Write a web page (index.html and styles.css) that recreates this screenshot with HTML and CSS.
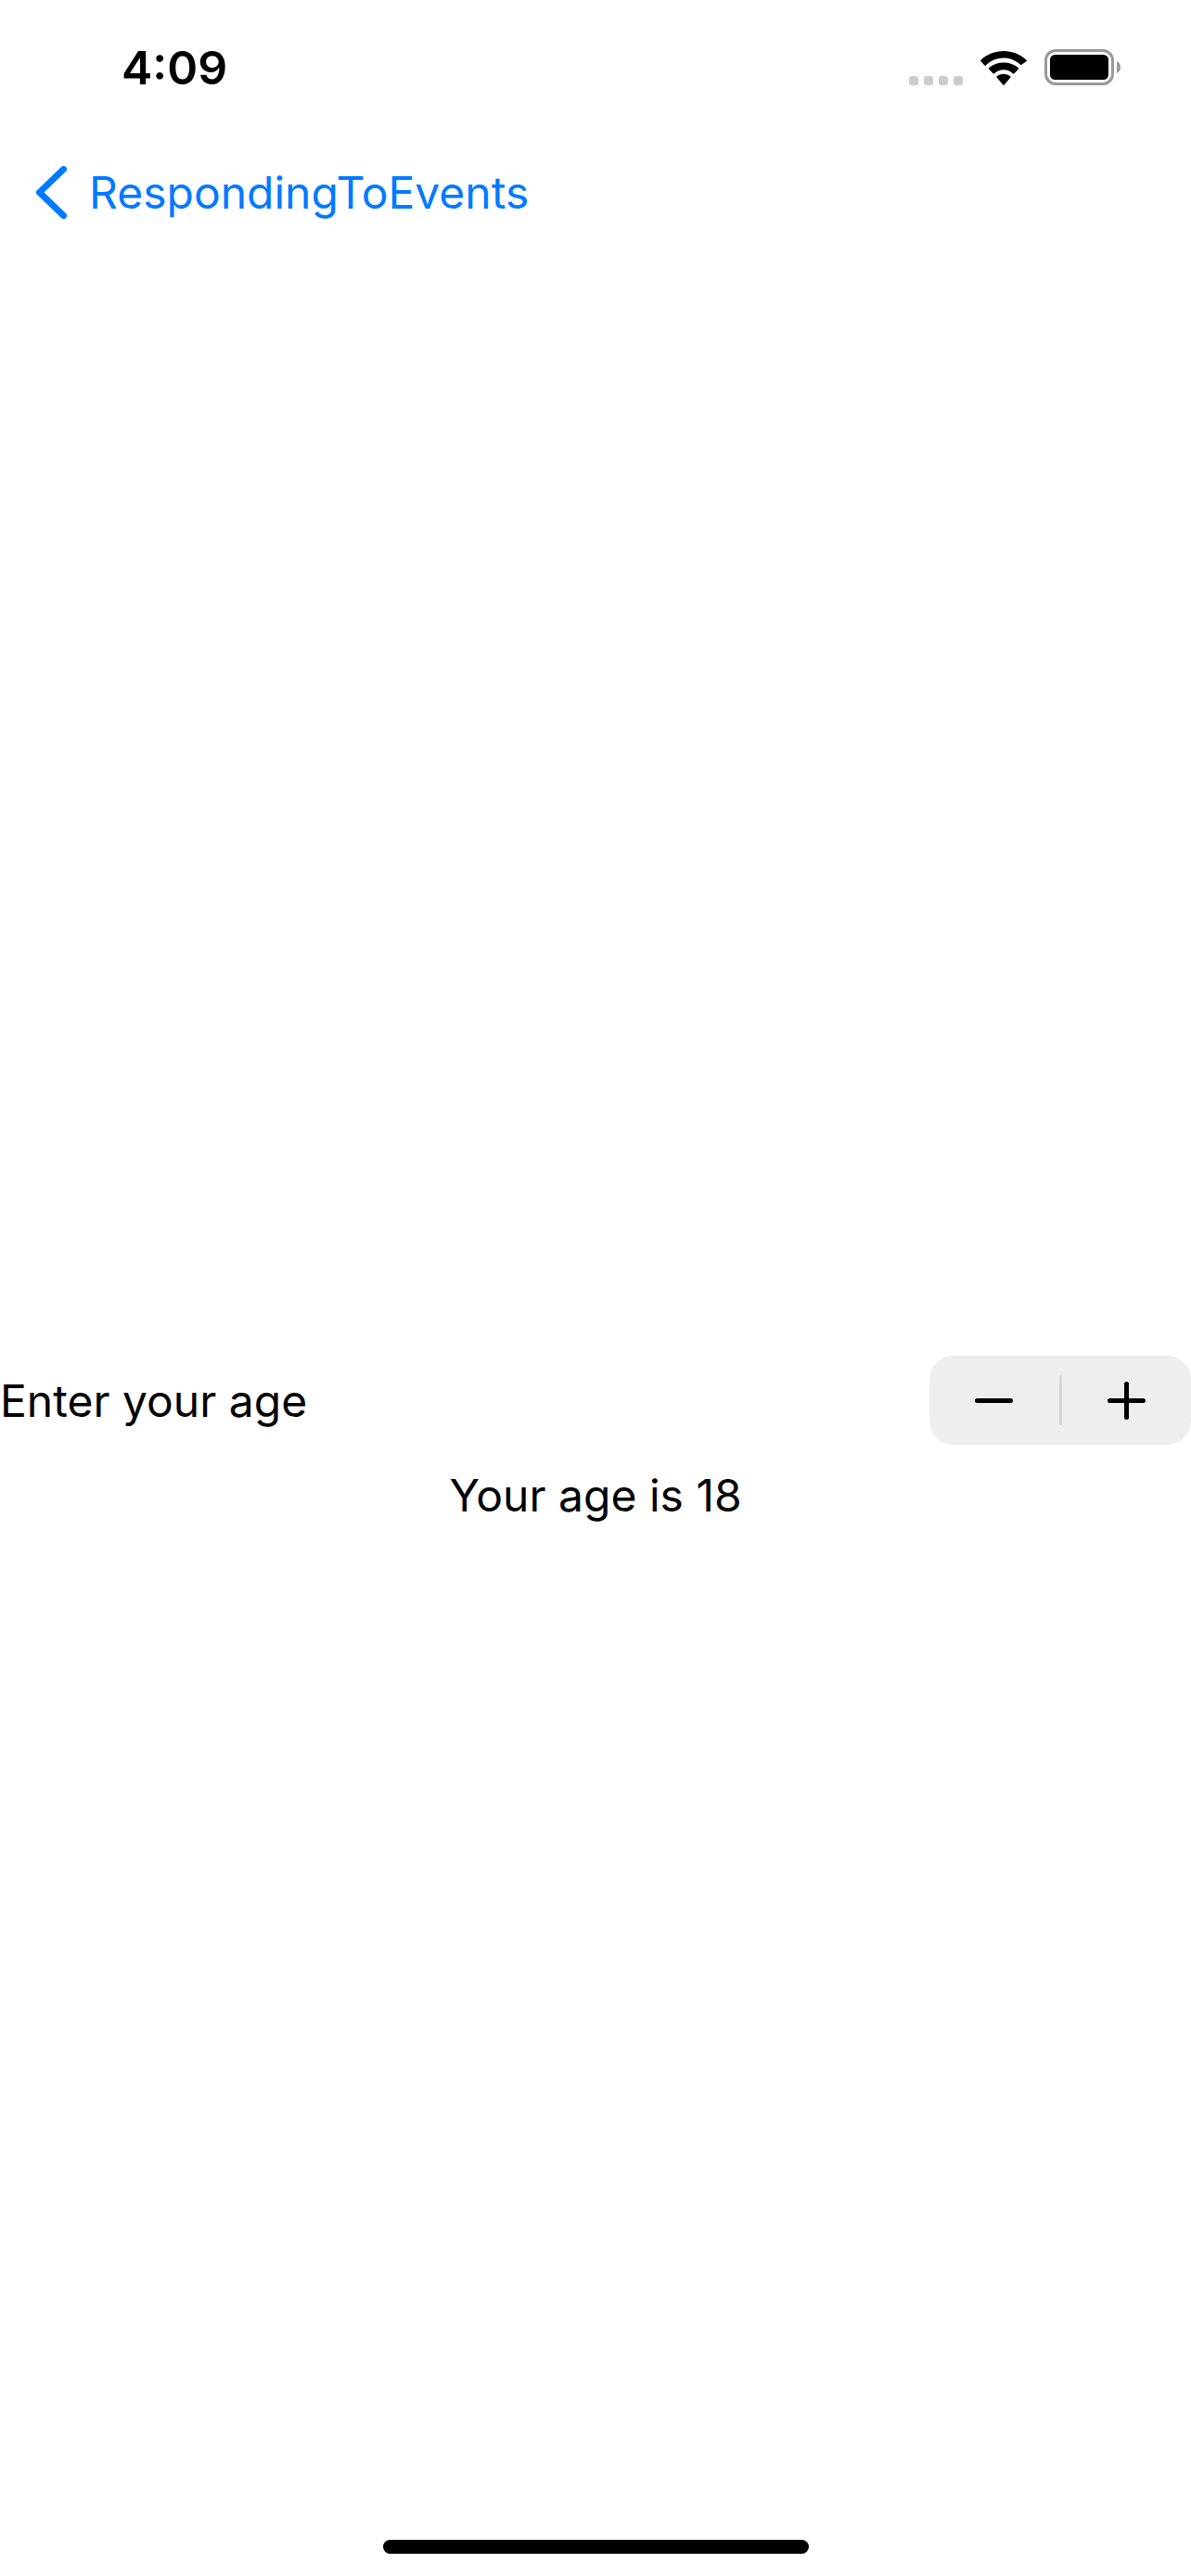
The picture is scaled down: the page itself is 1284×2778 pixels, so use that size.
FILE: index.html
```html
<!DOCTYPE html>
<html lang="en">
<head>
<meta charset="utf-8">
<meta name="viewport" content="width=device-width, initial-scale=1">
<title>RespondingToEvents</title>
<link rel="stylesheet" href="styles.css">
</head>
<body>
<div class="screen">
  <div class="status-bar">
    <time class="clock">4:09</time>
    <div class="status-icons">
      <svg class="signal" width="58" height="10" viewBox="0 0 58 10" aria-hidden="true">
        <rect x="0" width="10" height="10" rx="3"/>
        <rect x="16" width="10" height="10" rx="3"/>
        <rect x="32" width="10" height="10" rx="3"/>
        <rect x="48" width="10" height="10" rx="3"/>
      </svg>
      <svg class="wifi" width="50" height="37" viewBox="0 0 50 37" aria-hidden="true">
        <path d="M25 7.5c6.900 0 13.200 2.700 18 7.200.4.400 1 .4 1.400 0l5.200-3.700c.4-.4.400-.9 0-1.300C42.900 3.500 34.300 0 25 0S7.100 3.500.4 9.700c-.4.400-.4.900 0 1.300l4 4.600c.4.400 1 .4 1.400 0C10.900 10.300 17.600 7.500 25 7.500z"/>
        <path d="M25 20.300c3.800 0 7.300 1.500 9.900 3.900.4.400 1 .4 1.400 0l4.700-4.600c.4-.4.400-.9 0-1.300-4.300-4-9.900-5.900-16-5.900s-11.700 1.900-16 5.900c-.4.400-.4.900 0 1.300l4.700 4.600c.4.400 1 .4 1.400 0 2.600-2.400 6.100-3.900 9.900-3.900z"/>
        <path d="M32.400 28.600c.4-.4.400-.9 0-1.300A11.300 11.300 0 0 0 25 24.800c-2.800 0-5.400.9-7.400 2.500-.4.400-.4.900 0 1.300l6.700 7.900c.4.400 1 .4 1.400 0z"/>
      </svg>
      <svg class="battery" width="82" height="39" viewBox="0 0 82 39" aria-hidden="true">
        <rect class="battery-shell" x="1.500" y="1.500" width="72" height="36" rx="10.500"/>
        <rect x="6" y="6" width="63" height="27" rx="5.500"/>
        <path class="battery-cap" d="M78 13c2.500 1 4 3.700 4 6.500s-1.500 5.500-4 6.500z"/>
      </svg>
    </div>
  </div>

  <nav class="nav-bar">
    <a class="back" href="#">
      <svg width="33" height="57" viewBox="0 0 33 57" aria-hidden="true">
        <path d="M29.500 3.500L3.500 28.500l26 25"/>
      </svg>
      <span>RespondingToEvents</span>
    </a>
  </nav>

  <main class="content">
    <div class="stepper-row">
      <span id="age-label">Enter your age</span>
      <div class="stepper" role="group" aria-labelledby="age-label">
        <button class="step" type="button" aria-label="Decrement">
          <svg width="41" height="41" viewBox="0 0 41 41" aria-hidden="true"><path d="M2.500 20.500h36"/></svg>
        </button>
        <span class="divider"></span>
        <button class="step" type="button" aria-label="Increment">
          <svg width="41" height="41" viewBox="0 0 41 41" aria-hidden="true"><path d="M2.500 20.500h36M20.500 2.500v36"/></svg>
        </button>
      </div>
    </div>
    <p class="result">Your age is 18</p>
  </main>

  <div class="home-area"><div class="home-indicator"></div></div>
</div>
</body>
</html>
```

FILE: styles.css
```css
* {
  box-sizing: border-box;
}

body {
  margin: 0;
  background: #fff;
  color: #000;
  font-family: Inter, "Liberation Sans", sans-serif;
  font-size: 48px;
  line-height: 61px;
}

.screen {
  display: flex;
  flex-direction: column;
  min-height: 100vh;
}

.status-bar {
  display: flex;
  justify-content: space-between;
  height: 141px;
  padding: 43px 76px 0 131px;
}

.clock {
  font-size: 50px;
  font-weight: 600;
}

.status-icons {
  display: flex;
  align-items: flex-end;
  gap: 19px;
  height: 49px;
}

.signal {
  fill: #ccc;
}

.battery-shell {
  fill: none;
  stroke: #999;
  stroke-width: 3;
}

.battery-cap {
  fill: #999;
}

.nav-bar {
  display: flex;
  align-items: center;
  height: 132px;
  padding: 0 39px;
}

.back {
  display: flex;
  align-items: center;
  gap: 24px;
  color: #007aff;
  text-decoration: none;
}

.back path {
  fill: none;
  stroke: currentColor;
  stroke-width: 7;
  stroke-linecap: round;
  stroke-linejoin: round;
}

/* Top padding is the space of the empty large title. */
.content {
  display: flex;
  flex: 1;
  flex-direction: column;
  justify-content: center;
  gap: 24px;
  padding-top: 156px;
}

.stepper-row {
  display: flex;
  align-items: center;
  justify-content: space-between;
}

.stepper {
  display: flex;
  align-items: center;
  width: 282px;
  height: 96px;
  border-radius: 26px;
  background: #eee;
}

.step {
  display: flex;
  flex: 1;
  align-items: center;
  justify-content: center;
  height: 100%;
  padding: 0;
  border: 0;
  background: none;
  color: inherit;
}

.step path {
  fill: none;
  stroke: currentColor;
  stroke-width: 5;
  stroke-linecap: round;
}

.divider {
  width: 3px;
  height: 54px;
  border-radius: 2px;
  background: #d6d6d6;
}

.result {
  margin: 0;
  text-align: center;
}

.home-area {
  display: flex;
  align-items: flex-end;
  justify-content: center;
  height: 102px;
  padding-bottom: 24px;
}

.home-indicator {
  width: 459px;
  height: 15px;
  border-radius: 8px;
  background: #000;
}
```
